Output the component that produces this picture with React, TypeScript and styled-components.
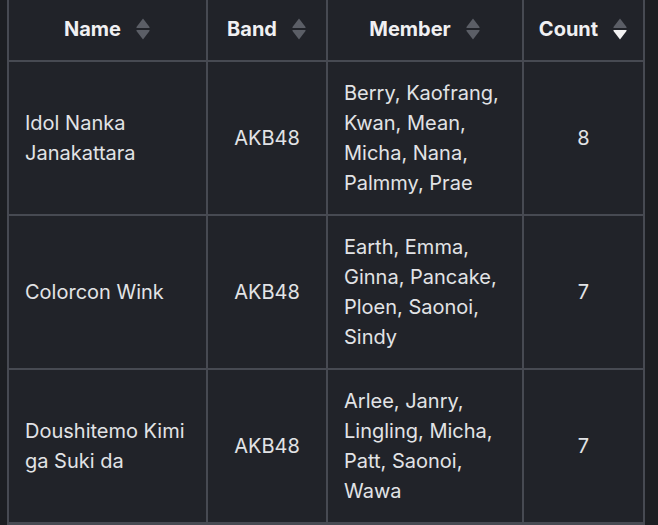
import React from 'react';
import styled, { createGlobalStyle } from 'styled-components';

type Sort = 'none' | 'asc' | 'desc';

interface Song {
  name: string;
  band: string;
  members: string;
  count: number;
}

const songs: Song[] = [
  {
    name: 'Idol Nanka Janakattara',
    band: 'AKB48',
    members: 'Berry, Kaofrang, Kwan, Mean, Micha, Nana, Palmmy, Prae',
    count: 8,
  },
  {
    name: 'Colorcon Wink',
    band: 'AKB48',
    members: 'Earth, Emma, Ginna, Pancake, Ploen, Saonoi, Sindy',
    count: 7,
  },
  {
    name: 'Doushitemo Kimi ga Suki da',
    band: 'AKB48',
    members: 'Arlee, Janry, Lingling, Micha, Patt, Saonoi, Wawa',
    count: 7,
  },
];

const columns: { label: string; sort: Sort }[] = [
  { label: 'Name', sort: 'none' },
  { label: 'Band', sort: 'none' },
  { label: 'Member', sort: 'none' },
  { label: 'Count', sort: 'desc' },
];

const SortIcon: React.FC<{ sort: Sort }> = ({ sort }) => (
  <svg width="16" height="24" viewBox="0 0 16 24">
    <path
      d="M8 1.5 L14.5 10 Q15 11 14 11 H2 Q1 11 1.5 10 Z"
      fill={sort === 'asc' ? '#f2f2f2' : '#5b5e66'}
    />
    <path
      d="M2 13 H14 Q15 13 14.5 14 L8 22.5 L1.5 14 Q1 13 2 13 Z"
      fill={sort === 'desc' ? '#f2f2f2' : '#5b5e66'}
    />
  </svg>
);

const App: React.FC = () => {
  return (
    <Page>
      <GlobalStyle />
      <Table>
        {columns.map((c) => (
          <HeaderCell key={c.label}>
            <span>{c.label}</span>
            <SortIcon sort={c.sort} />
          </HeaderCell>
        ))}
        {songs.map((s) => (
          <React.Fragment key={s.name}>
            <Cell>{s.name}</Cell>
            <Cell align="center">{s.band}</Cell>
            <Cell>{s.members}</Cell>
            <Cell align="center">{s.count}</Cell>
          </React.Fragment>
        ))}
      </Table>
    </Page>
  );
};

export default App;

const GlobalStyle = createGlobalStyle`
  html, body {
    margin: 0;
    padding: 0;
    background: #1c1e22;
    overflow: hidden;
  }
`;

const Page = styled.div`
  padding-left: 7px;
  height: 525px;
  background: #1c1e22;
  font-family: Inter, 'Noto Sans', sans-serif;
`;

const Table = styled.div`
  display: inline-grid;
  grid-template-columns: 197px 118px 194px 119px;
  grid-template-rows: 60px repeat(3, 152px) 20px;
  gap: 2px;
  padding: 0 2px;
  background: #474a52;
`;

const HeaderCell = styled.div`
  display: flex;
  align-items: center;
  justify-content: center;
  gap: 14px;
  background: #212329;
  color: #f0f0f2;
  font-size: 20px;
  font-weight: 700;
  padding-bottom: 2px;
`;

const Cell = styled.div<{ align?: 'left' | 'center' }>`
  display: flex;
  align-items: center;
  justify-content: ${(p) => (p.align === 'center' ? 'center' : 'flex-start')};
  padding: 16px;
  background: #212329;
  color: #e2e3e6;
  font-size: 20px;
  line-height: 30px;
`;
